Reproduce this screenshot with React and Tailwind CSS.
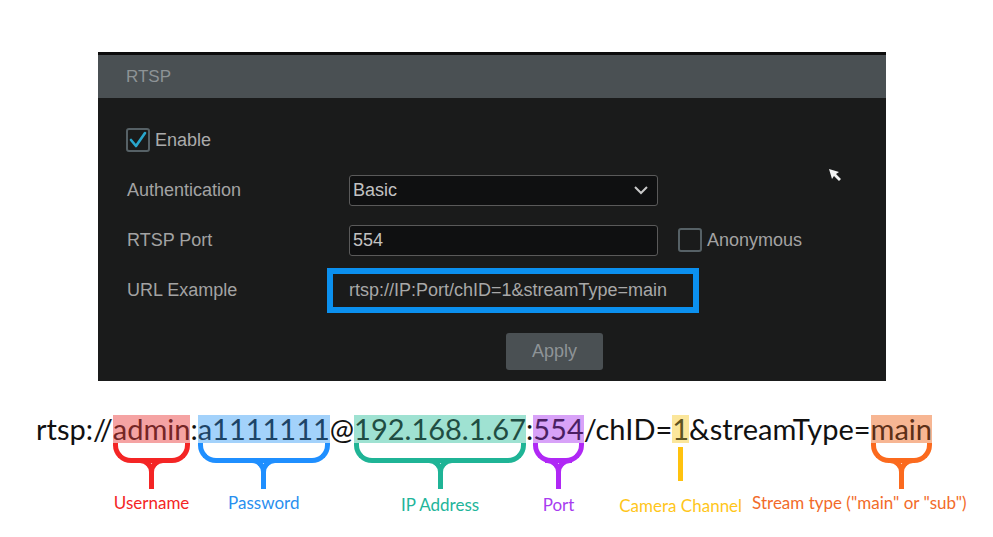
function Brace({ color }) {
    return (
        <div className="flex flex-col w-full">
            <div className="flex h-[20px]">
                <div className={"flex-1 border-l-[5px] border-b-[5px] rounded-bl-[18px] " + color}/>
                <div className={"flex-1 border-r-[5px] border-b-[5px] rounded-br-[18px] " + color}/>
            </div>
            <div className="flex justify-center -mt-[5px] h-[31px]">
                <div className={"w-[16px] border-t-[5px] border-r-[5px] rounded-tr-[14px] " + color}/>
                <div className={"w-[16px] -ml-[5px] border-t-[5px] border-l-[5px] rounded-tl-[14px] " + color}/>
            </div>
        </div>
    )
}

function Label({ children, className = "" }) {
    // zero-width so the label never widens its column; centred overflow
    return (
        <div className={"self-center w-0 flex justify-center whitespace-nowrap text-[17px] leading-[20px] " + className}>
            {children}
        </div>
    )
}

function Part({ text, hl, brace, label, labelClass = "" }) {
    return (
        <div className="flex flex-col">
            <span className={"h-[28px] leading-[28px] " + hl}>{text}</span>
            <Brace color={brace}/>
            <Label className={"mt-[4px] " + labelClass}>{label}</Label>
        </div>
    )
}

function Plain({ text }) {
    return <span className="h-[28px] leading-[28px]">{text}</span>
}

function Checkbox({ checked }) {
    return (
        <div className="w-[24px] h-[24px] border-2 border-[#566166] rounded-[3px] flex items-center justify-center">
            {checked && (
                <svg width="18" height="18" viewBox="0 0 18 18">
                    <polyline points="2,9 7,15 16,2" fill="none" stroke="#29a6cc" strokeWidth="2.6"
                              strokeLinecap="round" strokeLinejoin="round"/>
                </svg>
            )}
        </div>
    )
}

export default function App() {
    return (
        <div className="w-[993px] h-[537px] bg-white overflow-hidden">
            <div className="ml-[98px] w-[788px] mt-[52px] border-t-[3px] border-[#0c0c0c] font-['Liberation_Sans',Arial,sans-serif] text-[18px]">
                <div className="h-[43px] bg-[#4a5053] pl-[28px] flex items-center text-[17px] text-[#8d9396]">
                    RTSP
                </div>
                <div className="relative bg-[#1a1b1b] pt-[17px] pb-[11px] text-[#a3a3a3]">
                    <div className="flex items-center h-[50px] pl-[28px] gap-[5px]">
                        <Checkbox checked/>
                        <span className="text-[#ababab]">Enable</span>
                    </div>
                    <div className="flex items-center h-[50px] pl-[29px]">
                        <span className="w-[222px]">Authentication</span>
                        <div className="w-[309px] h-[31px] border border-[#5a5a5a] rounded-[3px] bg-[#0f1011] pl-[3px] pr-[8px] flex items-center justify-between text-[#c2c2c2]">
                            <span>Basic</span>
                            <svg width="16" height="10" viewBox="0 0 16 10">
                                <polyline points="2,2 8,8 14,2" fill="none" stroke="#c8c8c8" strokeWidth="2"/>
                            </svg>
                        </div>
                    </div>
                    <div className="flex items-center h-[50px] pl-[29px]">
                        <span className="w-[222px]">RTSP Port</span>
                        <div className="w-[309px] h-[31px] border border-[#5a5a5a] rounded-[3px] bg-[#0f1011] pl-[3px] flex items-center text-[#c2c2c2]">
                            554
                        </div>
                        <div className="ml-[20px] flex items-center gap-[5px]">
                            <Checkbox/>
                            <span>Anonymous</span>
                        </div>
                    </div>
                    <div className="flex items-center h-[50px] pl-[29px]">
                        <span className="w-[200px]">URL Example</span>
                        <div className="w-[372px] h-[45px] border-[6px] border-[#0b90ef] pl-[16px] flex items-center text-[#a8a8a8]">
                            rtsp://IP:Port/chID=1&amp;streamType=main
                        </div>
                    </div>
                    <div className="flex mt-[18px] pl-[408px]">
                        <button className="w-[97px] h-[37px] bg-[#4a5053] rounded-[3px] text-[#8e9497]">Apply</button>
                    </div>
                    <svg className="absolute left-[730px] top-[70px]" width="14" height="14" viewBox="0 0 14 14">
                        <polygon points="1,1 11,4 8,6 13,11 11,13 6,8 4,11" fill="#f2f2f2"/>
                    </svg>
                </div>
            </div>

            <div className="mt-[34px] pl-[36px] flex items-start font-['Lato',sans-serif] text-[29px] text-[#111]">
                <Plain text="rtsp://"/>
                <Part text="admin" hl="bg-[#f5a3a3] text-[#752626]" brace="border-[#f42525]"
                      label="Username" labelClass="text-[#f42525]"/>
                <Plain text=":"/>
                <Part text="a1111111" hl="bg-[#a3d2fb] text-[#1d4467]" brace="border-[#1f8fff]"
                      label="Password" labelClass="text-[#2a8fef]"/>
                <Plain text="@"/>
                <Part text="192.168.1.67" hl="bg-[#9fe2d2] text-[#1f4d43]" brace="border-[#1fb496]"
                      label="IP Address" labelClass="text-[#22b59a] mt-[6px]"/>
                <Plain text=":"/>
                <Part text="554" hl="bg-[#d8a2f8] text-[#4a1f63]" brace="border-[#b028f5]"
                      label="Port" labelClass="text-[#a83cf0] mt-[6px]"/>
                <Plain text="/chID="/>
                <div className="flex flex-col">
                    <span className="h-[28px] leading-[28px] bg-[#fbe69b] text-[#5e5320]">1</span>
                    <div className="self-center w-[5px] h-[34px] mt-[4px] bg-[#ffc20e]"/>
                    <Label className="mt-[15px] text-[#ffc61a]">Camera Channel</Label>
                </div>
                <Plain text="&streamType="/>
                <Part text="main" hl="bg-[#f7b693] text-[#5c3018]" brace="border-[#fb6a1e]"
                      label={'Stream type ("main" or "sub")'} labelClass="text-[#f26b2a] -translate-x-[42px]"/>
            </div>
        </div>
    )
}
